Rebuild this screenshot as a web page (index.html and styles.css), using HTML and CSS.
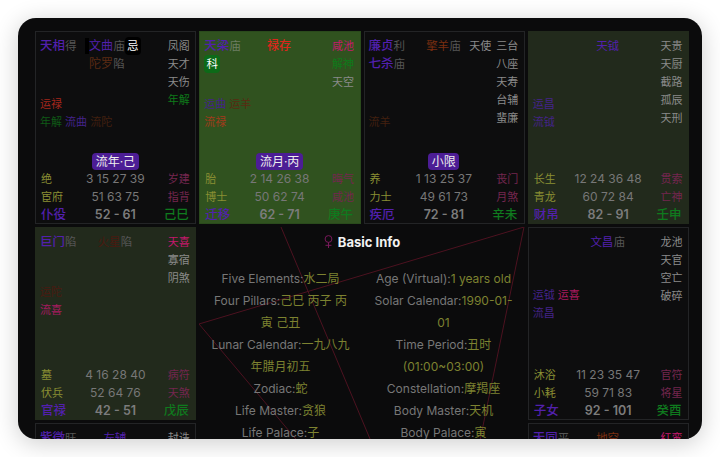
FILE: index.html
```html
<!DOCTYPE html>
<html lang="en">
<head>
	<meta charset="UTF-8">
	<title>Astrolabe</title>
	<link rel="stylesheet" href="styles.css">
</head>
<body>
	<div class="window">
		<div class="chart">

			<div class="cell">
				<div class="stars">
					<div class="major"><div><b class="c-major">天相</b><i>得</i></div></div>
					<div class="minor minor-lg">
						<div><span class="mark"></span><span class="c-major">文曲</span><i>庙</i><span class="mut mut-ji">忌</span></div>
						<div><span class="c-tuo">陀罗</span><i>陷</i></div>
					</div>
					<div class="adj">
						<div>凤阁</div><div>天才</div><div>天伤</div><div class="c-green">年解</div>
					</div>
					<div class="horo">
						<div class="c-red-d">运禄</div>
						<div><span class="c-green-d">年解</span> <span class="c-major-d">流曲</span> <span class="c-tuo-d">流陀</span></div>
					</div>
				</div>
				<div class="tag">流年·己</div>
				<div class="foot">
					<span class="c-olive">绝</span><span class="num">3 15 27 39</span><span class="c-plum">岁建</span>
					<span class="c-olive">宦府</span><span class="num">51 63 75</span><span class="c-plum">指背</span>
					<b class="c-major">仆役</b><b class="age">52 - 61</b><span class="stem c-stem">己巳</span>
				</div>
			</div>

			<div class="cell cell-on">
				<div class="stars">
					<div class="major">
						<div><b class="c-major">天梁</b><i>庙</i></div>
						<div><span class="mut mut-ke">科</span></div>
					</div>
					<div class="minor"><div><b class="c-lu">禄存</b></div></div>
					<div class="adj">
						<div class="c-pink">咸池</div><div class="c-green">解神</div><div>天空</div>
					</div>
					<div class="horo">
						<div><span class="c-major-d">运曲</span> <span class="c-tuo">运羊</span></div>
						<div class="c-red-m">流禄</div>
					</div>
				</div>
				<div class="tag">流月·丙</div>
				<div class="foot">
					<span class="c-olive">胎</span><span class="num">2 14 26 38</span><span class="c-plum">晦气</span>
					<span class="c-olive">博士</span><span class="num">50 62 74</span><span class="c-plum">咸池</span>
					<b class="c-major">迁移</b><b class="age">62 - 71</b><span class="stem c-stem">庚午</span>
				</div>
			</div>

			<div class="cell">
				<div class="stars">
					<div class="major">
						<div><b class="c-major">廉贞</b><i>利</i></div>
						<div><b class="c-major">七杀</b><i>庙</i></div>
					</div>
					<div class="minor"><div><span class="c-yang">擎羊</span><i>庙</i></div></div>
					<div class="adj">
						<div class="adj-pair"><span>天使</span><span>三台</span></div>
						<div>八座</div><div>天寿</div><div>台辅</div><div>蜚廉</div>
					</div>
					<div class="horo">
						<div></div>
						<div class="c-tuo-d">流羊</div>
					</div>
				</div>
				<div class="tag">小限</div>
				<div class="foot">
					<span class="c-olive">养</span><span class="num">1 13 25 37</span><span class="c-plum">丧门</span>
					<span class="c-olive">力士</span><span class="num">49 61 73</span><span class="c-plum">月煞</span>
					<b class="c-major">疾厄</b><b class="age">72 - 81</b><b class="stem c-stem">辛未</b>
				</div>
			</div>

			<div class="cell cell-dim">
				<div class="stars">
					<div class="major"></div>
					<div class="minor"><div class="c-major">天钺</div></div>
					<div class="adj">
						<div>天贵</div><div>天厨</div><div>截路</div><div>孤辰</div><div>天刑</div>
					</div>
					<div class="horo">
						<div class="c-major-d">运昌</div>
						<div class="c-major-d">流钺</div>
					</div>
				</div>
				<div class="foot foot-only">
					<span class="c-olive">长生</span><span class="num">12 24 36 48</span><span class="c-plum">贯索</span>
					<span class="c-olive">青龙</span><span class="num">60 72 84</span><span class="c-plum">亡神</span>
					<b class="c-major">财帛</b><b class="age">82 - 91</b><span class="stem c-stem">壬申</span>
				</div>
			</div>

			<div class="cell cell-dim">
				<div class="stars stars-short">
					<div class="major"><div><b class="c-major">巨门</b><i>陷</i></div></div>
					<div class="minor"><div><span class="c-huo">火星</span><i>陷</i></div></div>
					<div class="adj">
						<div class="c-pink">天喜</div><div>寡宿</div><div>阴煞</div>
					</div>
					<div class="horo">
						<div class="c-huo">运陀</div>
						<div class="c-pink-d">流喜</div>
					</div>
				</div>
				<div class="foot foot-only">
					<span class="c-olive">墓</span><span class="num">4 16 28 40</span><span class="c-plum">病符</span>
					<span class="c-olive">伏兵</span><span class="num">52 64 76</span><span class="c-plum">天煞</span>
					<b class="c-major">官禄</b><b class="age">42 - 51</b><span class="stem c-stem">戊辰</span>
				</div>
			</div>

			<div class="center">
				<svg class="lines" viewBox="0 0 325.5 388.5">
					<polyline points="325,0 0,97 245,388 325,0"/>
					<line x1="82" y1="0" x2="245" y2="388"/>
				</svg>
				<div class="title">
					<svg class="venus" width="9" height="13" viewBox="0 0 9 13">
						<circle cx="4.5" cy="4" r="3.4"/>
						<path d="M4.5 7.4V13M1.5 10.3H7.5"/>
					</svg>
					<b>Basic Info</b>
				</div>
				<div class="info">
					<div class="info-col">
						<p>Five Elements:<span>水二局</span></p>
						<p>Four Pillars:<span>己巳 丙子 丙寅 己丑</span></p>
						<p>Lunar Calendar:<span>一九八九年腊月初五</span></p>
						<p>Zodiac:<span>蛇</span></p>
						<p>Life Master:<span>贪狼</span></p>
						<p>Life Palace:<span>子</span></p>
					</div>
					<div class="info-col">
						<p>Age (Virtual):<span>1 years old</span></p>
						<p>Solar Calendar:<span>1990-01-01</span></p>
						<p>Time Period:<span>丑时(01:00~03:00)</span></p>
						<p>Constellation:<span>摩羯座</span></p>
						<p>Body Master:<span>天机</span></p>
						<p>Body Palace:<span>寅</span></p>
					</div>
				</div>
			</div>

			<div class="cell">
				<div class="stars stars-mid">
					<div class="major"></div>
					<div class="minor"><div><span class="c-major">文昌</span><i>庙</i></div></div>
					<div class="adj">
						<div>龙池</div><div>天官</div><div>空亡</div><div>破碎</div>
					</div>
					<div class="horo">
						<div><span class="c-major-d">运钺</span> <span class="c-pink-d">运喜</span></div>
						<div class="c-major-d">流昌</div>
					</div>
				</div>
				<div class="foot foot-only">
					<span class="c-olive">沐浴</span><span class="num">11 23 35 47</span><span class="c-plum">官符</span>
					<span class="c-olive">小耗</span><span class="num">59 71 83</span><span class="c-plum">将星</span>
					<b class="c-major">子女</b><b class="age">92 - 101</b><b class="stem c-stem">癸酉</b>
				</div>
			</div>

			<div class="cell">
				<div class="stars">
					<div class="major"><div><b class="c-major">紫微</b><i>旺</i></div></div>
					<div class="minor"><div class="c-major">左辅</div></div>
					<div class="adj"><div>封诰</div></div>
				</div>
			</div>

			<div class="cell">
				<div class="stars">
					<div class="major"><div><b class="c-major">天同</b><i>平</i></div></div>
					<div class="minor"><div class="c-yang">地空</div></div>
					<div class="adj"><div class="c-pink">红鸾</div></div>
				</div>
			</div>

		</div>
	</div>
</body>
</html>
```

FILE: styles.css
```css
*{margin:0;padding:0;box-sizing:border-box;}
body{
	background:#fff;
	padding:18px;
	font-family:Inter,"Noto Sans CJK SC",sans-serif;
	font-size:11px;
	line-height:18px;
}
.window{
	width:684px;
	height:421px;
	padding:13px 13px 0 17px;
	background:#0b0b0c;
	border-radius:18px;
	box-shadow:0 4px 24px rgba(0,0,0,.2);
	overflow:hidden;
}
.chart{
	display:grid;
	grid-template-columns:repeat(4,161.25px);
	grid-auto-rows:192.75px;
	gap:3px;
}
.cell{
	display:flex;
	flex-direction:column;
	padding:5px 5.5px 0 5px;
	border:1px solid #232426;
	background:#0d0d0e;
	color:#8a8a8a;
}
.cell-on{background:#30521f;border-color:#2a4a1c;}
.cell-dim{background:#222a1c;border-color:#222a1c;}

.stars{
	display:grid;
	grid-template-columns:1fr auto 1fr;
	grid-template-rows:58px 36px;
	margin-left:-1px;
}
.stars-short{grid-template-rows:50px 36px;}
.stars-mid{grid-template-rows:53px 36px;}
.major b,.minor b{font-weight:500;}
.major b,.foot>b.c-major{font-size:12.5px;font-weight:500;}
.stars i{font-style:normal;color:#555;font-size:11.5px;}
.cell-on .stars i{color:#6d7d62;}
.minor{font-size:11.5px;}
.minor-lg{font-size:12px;}
.minor b{font-size:12px;}
.minor>div{display:flex;align-items:center;}
.mark{width:4px;height:16px;margin-left:-4px;background:#000;}
.mut{
	display:inline-block;
	width:16px;
	height:18px;
	text-align:center;
	border-radius:4px;
	color:#fff;
	font-size:11.5px;
}
.mut-ji{background:#000;}
.mut-ke{background:#0d6a18;}
.adj{
	grid-column:3;
	grid-row:1 / 3;
	text-align:right;
}
.adj-pair{display:flex;justify-content:flex-end;gap:5px;}
.horo{
	grid-column:1 / 3;
	grid-row:2;
}
.horo>div{height:18px;}

.tag{
	align-self:center;
	height:17px;
	margin-top:auto;
	padding:0 3.5px;
	border-radius:4px;
	background:#4c1d95;
	color:#eee;
	font-size:12px;
	line-height:17px;
}
.foot{
	display:grid;
	grid-template-columns:1fr auto 1fr;
	grid-auto-rows:18px;
	flex:none;
	margin-bottom:-1px;
}
.foot-only{margin-top:auto;}
.foot>:nth-child(3n){text-align:right;}
.num{font-size:12px;color:#777;text-align:center;}
.age{font-size:12.5px;font-weight:600;color:#7c7c7c;text-align:center;}
.stem{font-size:12.5px;font-weight:500;padding-right:1px;}

.c-major{color:#5220ad;}
.c-major-d{color:#44238a;}
.c-red-d{color:#a3261c;}
.c-red-m{color:#a33a1c;}
.c-lu{color:#d9281c;}
.c-green{color:#0e7a1a;}
.c-green-d{color:#0f5a16;}
.c-tuo{color:#5a2a12;}
.c-tuo-d{color:#43200f;}
.c-yang{color:#7a2e10;}
.c-huo{color:#4a1a10;}
.c-pink{color:#c4186c;}
.c-pink-d{color:#a81a60;}
.c-plum{color:#74264f;}
.c-olive{color:#8a8f33;}
.c-stem{color:#0f7a1e;}

.center{
	grid-column:2 / 4;
	grid-row:2 / 4;
	position:relative;
	padding-top:6px;
	color:#777;
	font-size:12px;
}
.lines{
	position:absolute;
	top:0;
	left:0;
	width:100%;
	height:100%;
}
.lines polyline,.lines line{fill:none;stroke:#4d1220;stroke-width:1;}
.title{
	display:flex;
	align-items:center;
	justify-content:center;
	gap:5px;
	height:18px;
	color:#f2f2f2;
	font-size:13px;
}
.title b{font-weight:700;}
.venus{fill:none;stroke:#7a1a5c;stroke-width:1;}
.info{
	display:flex;
	justify-content:center;
	gap:22px;
	margin-top:17px;
	position:relative;
}
.info-col{width:141px;text-align:center;line-height:22px;}
.info-col span{color:#7d8230;}
```
